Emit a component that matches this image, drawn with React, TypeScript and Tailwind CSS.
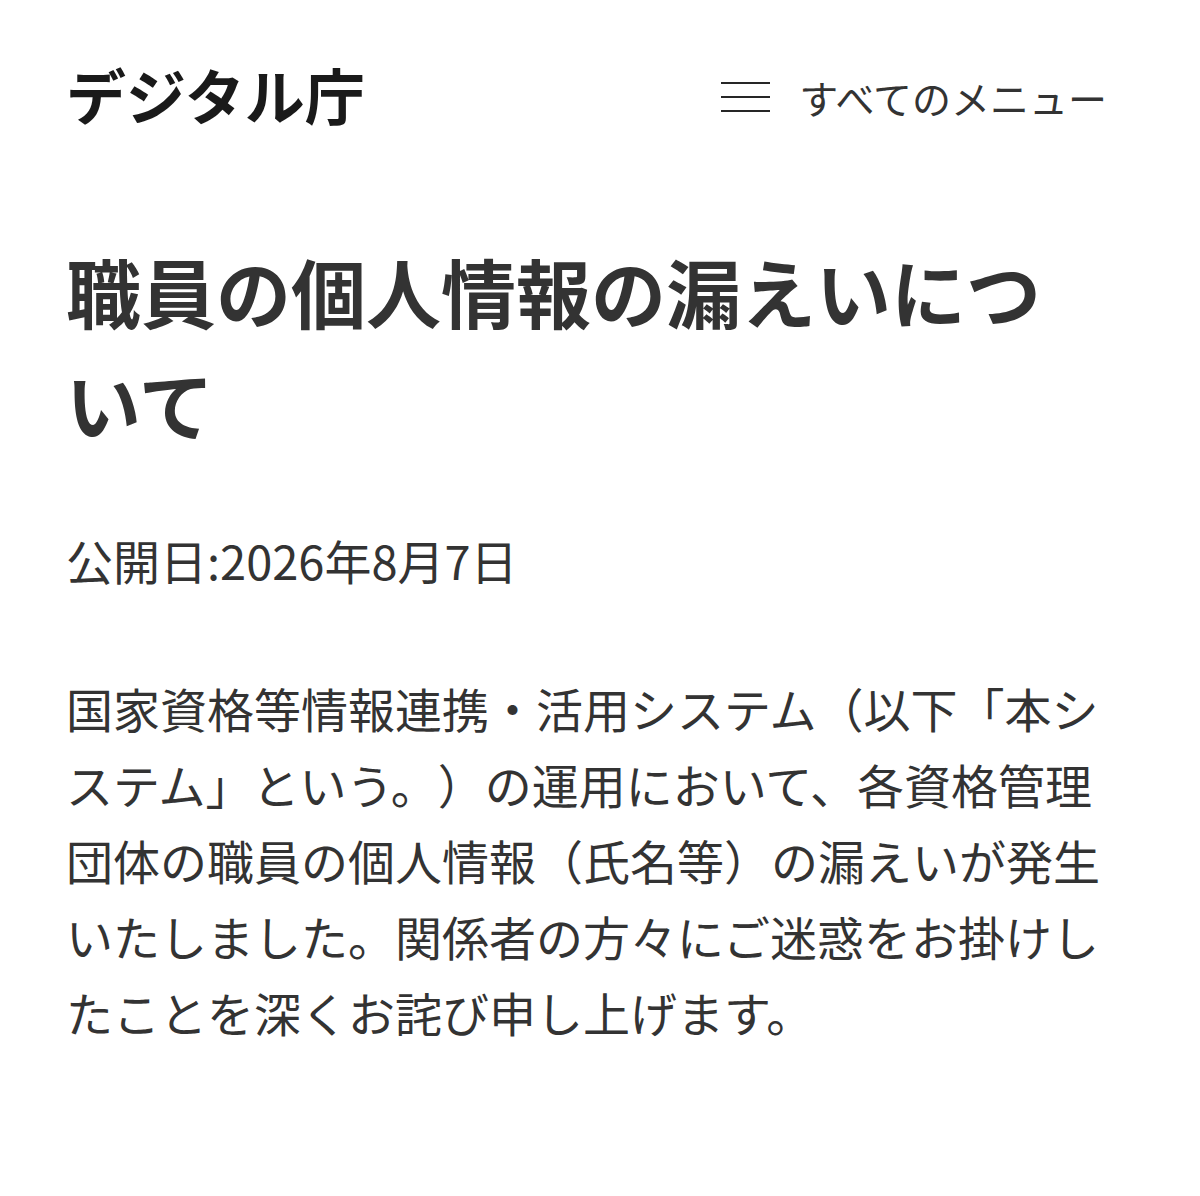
import React from "react";

export default function App() {
  return (
    <div
      className="w-[1200px] min-h-[1196px] bg-white pl-[66px] pr-[93px] pt-[54px] [text-spacing-trim:space-all]"
      style={{ fontFamily: '"Noto Sans CJK JP", "Noto Sans", sans-serif' }}
    >
      <header className="flex h-[80px] items-center justify-between">
        <div className="text-[60px] font-bold leading-[80px] text-[#1a1a1a]">
          デジタル庁
        </div>
        <div className="mt-[5px] flex items-center">
          <div className="flex w-[49px] flex-col gap-[12px]">
            <span className="block h-[2px] w-full bg-[#262626]" />
            <span className="block h-[2px] w-full bg-[#262626]" />
            <span className="block h-[2px] w-full bg-[#262626]" />
          </div>
          <span className="ml-[29px] text-[39px] leading-[80px] text-[#333]">
            すべてのメニュー
          </span>
        </div>
      </header>

      <h1 className="mt-[101px] w-[1042px] text-[75px] font-bold leading-[112px] text-[#333]">
        職員の個人情報の漏えいについて
      </h1>

      <p className="mt-[63px] text-[47px] leading-[76px] text-[#333]">
        公開日:2026年8月7日
      </p>

      <p className="mt-[72px] w-[1042px] text-[47px] leading-[76px] text-[#333]">
        国家資格等情報連携・活用システム（以下「本システム」という。）の運用において、各資格管理団体の職員の個人情報（氏名等）の漏えいが発生いたしました。関係者の方々にご迷惑をお掛けしたことを深くお詫び申し上げます。
      </p>
    </div>
  );
}
